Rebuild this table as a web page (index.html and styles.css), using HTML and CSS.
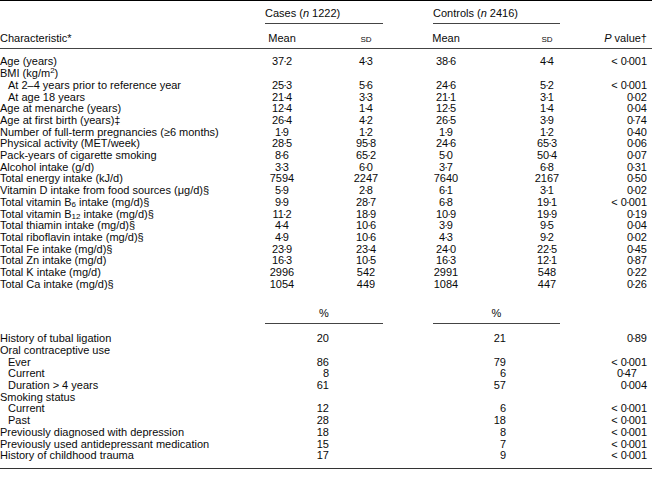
FILE: index.html
```html
<!DOCTYPE html>
<html lang="en">
<head>
<meta charset="utf-8">
<title>Characteristics of cases and controls</title>
<link rel="stylesheet" href="styles.css">
</head>
<body>
<table class="tbl">
  <colgroup>
    <col class="c1"><col class="c2"><col class="c3"><col class="c4"><col class="c5"><col class="c6">
  </colgroup>
  <thead>
    <tr class="grp-row">
      <th></th>
      <th colspan="2" class="grp"><div class="gl">Cases (<i>n</i> 1222)</div></th>
      <th colspan="2" class="grp"><div class="gl ct">Controls (<i>n</i> 2416)</div></th>
      <th></th>
    </tr>
    <tr class="hdr">
      <th class="lab">Characteristic*</th>
      <th class="m">Mean</th>
      <th class="s"><span class="sc">sd</span></th>
      <th class="m">Mean</th>
      <th class="s s2"><span class="sc">sd</span></th>
      <th class="p"><i>P</i> value†</th>
    </tr>
  </thead>
  <tbody>
    <tr class="first"><td class="lab">Age (years)</td><td class="m">37<span class="d">·</span>2</td><td class="s">4<span class="d">·</span>3</td><td class="m">38<span class="d">·</span>6</td><td class="s s2">4<span class="d">·</span>4</td><td class="p">&lt; 0<span class="d">·</span>001</td></tr>
    <tr><td class="lab">BMI (kg/m<sup>2</sup>)</td><td></td><td></td><td></td><td></td><td></td></tr>
    <tr><td class="lab in">At 2–4 years prior to reference year</td><td class="m">25<span class="d">·</span>3</td><td class="s">5<span class="d">·</span>6</td><td class="m">24<span class="d">·</span>6</td><td class="s s2">5<span class="d">·</span>2</td><td class="p">&lt; 0<span class="d">·</span>001</td></tr>
    <tr><td class="lab in">At age 18 years</td><td class="m">21<span class="d">·</span>4</td><td class="s">3<span class="d">·</span>3</td><td class="m">21<span class="d">·</span>1</td><td class="s s2">3<span class="d">·</span>1</td><td class="p">0<span class="d">·</span>02</td></tr>
    <tr><td class="lab">Age at menarche (years)</td><td class="m">12<span class="d">·</span>4</td><td class="s">1<span class="d">·</span>4</td><td class="m">12<span class="d">·</span>5</td><td class="s s2">1<span class="d">·</span>4</td><td class="p">0<span class="d">·</span>04</td></tr>
    <tr><td class="lab">Age at first birth (years)‡</td><td class="m">26<span class="d">·</span>4</td><td class="s">4<span class="d">·</span>2</td><td class="m">26<span class="d">·</span>5</td><td class="s s2">3<span class="d">·</span>9</td><td class="p">0<span class="d">·</span>74</td></tr>
    <tr><td class="lab">Number of full-term pregnancies (≥6 months)</td><td class="m">1<span class="d">·</span>9</td><td class="s">1<span class="d">·</span>2</td><td class="m">1<span class="d">·</span>9</td><td class="s s2">1<span class="d">·</span>2</td><td class="p">0<span class="d">·</span>40</td></tr>
    <tr><td class="lab">Physical activity (MET/week)</td><td class="m">28<span class="d">·</span>5</td><td class="s">95<span class="d">·</span>8</td><td class="m">24<span class="d">·</span>6</td><td class="s s2">65<span class="d">·</span>3</td><td class="p">0<span class="d">·</span>06</td></tr>
    <tr><td class="lab">Pack-years of cigarette smoking</td><td class="m">8<span class="d">·</span>6</td><td class="s">65<span class="d">·</span>2</td><td class="m">5<span class="d">·</span>0</td><td class="s s2">50<span class="d">·</span>4</td><td class="p">0<span class="d">·</span>07</td></tr>
    <tr><td class="lab">Alcohol intake (g/d)</td><td class="m">3<span class="d">·</span>3</td><td class="s">6<span class="d">·</span>0</td><td class="m">3<span class="d">·</span>7</td><td class="s s2">6<span class="d">·</span>8</td><td class="p">0<span class="d">·</span>31</td></tr>
    <tr><td class="lab">Total energy intake (kJ/d)</td><td class="m">7594</td><td class="s">2247</td><td class="m">7640</td><td class="s s2">2167</td><td class="p">0<span class="d">·</span>50</td></tr>
    <tr><td class="lab">Vitamin D intake from food sources (μg/d)§</td><td class="m">5<span class="d">·</span>9</td><td class="s">2<span class="d">·</span>8</td><td class="m">6<span class="d">·</span>1</td><td class="s s2">3<span class="d">·</span>1</td><td class="p">0<span class="d">·</span>02</td></tr>
    <tr><td class="lab">Total vitamin B<sub>6</sub> intake (mg/d)§</td><td class="m">9<span class="d">·</span>9</td><td class="s">28<span class="d">·</span>7</td><td class="m">6<span class="d">·</span>8</td><td class="s s2">19<span class="d">·</span>1</td><td class="p">&lt; 0<span class="d">·</span>001</td></tr>
    <tr><td class="lab">Total vitamin B<sub>12</sub> intake (mg/d)§</td><td class="m">11<span class="d">·</span>2</td><td class="s">18<span class="d">·</span>9</td><td class="m">10<span class="d">·</span>9</td><td class="s s2">19<span class="d">·</span>9</td><td class="p">0<span class="d">·</span>19</td></tr>
    <tr><td class="lab">Total thiamin intake (mg/d)§</td><td class="m">4<span class="d">·</span>4</td><td class="s">10<span class="d">·</span>6</td><td class="m">3<span class="d">·</span>9</td><td class="s s2">9<span class="d">·</span>5</td><td class="p">0<span class="d">·</span>04</td></tr>
    <tr><td class="lab">Total riboflavin intake (mg/d)§</td><td class="m">4<span class="d">·</span>9</td><td class="s">10<span class="d">·</span>6</td><td class="m">4<span class="d">·</span>3</td><td class="s s2">9<span class="d">·</span>2</td><td class="p">0<span class="d">·</span>02</td></tr>
    <tr><td class="lab">Total Fe intake (mg/d)§</td><td class="m">23<span class="d">·</span>9</td><td class="s">23<span class="d">·</span>4</td><td class="m">24<span class="d">·</span>0</td><td class="s s2">22<span class="d">·</span>5</td><td class="p">0<span class="d">·</span>45</td></tr>
    <tr><td class="lab">Total Zn intake (mg/d)</td><td class="m">16<span class="d">·</span>3</td><td class="s">10<span class="d">·</span>5</td><td class="m">16<span class="d">·</span>3</td><td class="s s2">12<span class="d">·</span>1</td><td class="p">0<span class="d">·</span>87</td></tr>
    <tr><td class="lab">Total K intake (mg/d)</td><td class="m">2996</td><td class="s">542</td><td class="m">2991</td><td class="s s2">548</td><td class="p">0<span class="d">·</span>22</td></tr>
    <tr><td class="lab">Total Ca intake (mg/d)§</td><td class="m">1054</td><td class="s">449</td><td class="m">1084</td><td class="s s2">447</td><td class="p">0<span class="d">·</span>26</td></tr>

    <tr class="pct-row">
      <td></td>
      <td colspan="2"><div class="gl pc">%</div></td>
      <td colspan="2"><div class="gl ct pc">%</div></td>
      <td></td>
    </tr>

    <tr class="after-pct"><td class="lab">History of tubal ligation</td><td colspan="2" class="pa">20</td><td colspan="2" class="pb">21</td><td class="p">0<span class="d">·</span>89</td></tr>
    <tr><td class="lab">Oral contraceptive use</td><td colspan="2"></td><td colspan="2"></td><td></td></tr>
    <tr><td class="lab in">Ever</td><td colspan="2" class="pa">86</td><td colspan="2" class="pb">79</td><td class="p">&lt; 0<span class="d">·</span>001</td></tr>
    <tr><td class="lab in">Current</td><td colspan="2" class="pa">8</td><td colspan="2" class="pb">6</td><td class="p shift">0<span class="d">·</span>47</td></tr>
    <tr><td class="lab in">Duration &gt; 4 years</td><td colspan="2" class="pa">61</td><td colspan="2" class="pb">57</td><td class="p">0<span class="d">·</span>004</td></tr>
    <tr><td class="lab">Smoking status</td><td colspan="2"></td><td colspan="2"></td><td></td></tr>
    <tr><td class="lab in">Current</td><td colspan="2" class="pa">12</td><td colspan="2" class="pb">6</td><td class="p">&lt; 0<span class="d">·</span>001</td></tr>
    <tr><td class="lab in">Past</td><td colspan="2" class="pa">28</td><td colspan="2" class="pb">18</td><td class="p">&lt; 0<span class="d">·</span>001</td></tr>
    <tr><td class="lab">Previously diagnosed with depression</td><td colspan="2" class="pa">18</td><td colspan="2" class="pb">8</td><td class="p">&lt; 0<span class="d">·</span>001</td></tr>
    <tr><td class="lab">Previously used antidepressant medication</td><td colspan="2" class="pa">15</td><td colspan="2" class="pb">7</td><td class="p">&lt; 0<span class="d">·</span>001</td></tr>
    <tr class="last"><td class="lab">History of childhood trauma</td><td colspan="2" class="pa">17</td><td colspan="2" class="pb">9</td><td class="p">&lt; 0<span class="d">·</span>001</td></tr>
  </tbody>
</table>
</body>
</html>
```

FILE: styles.css
```css
html, body {
  margin: 0;
  padding: 0;
  background: #ffffff;
}

body {
  color: #0a0a0a;
  font-family: "Liberation Sans", Arial, sans-serif;
  font-size: 11px;
  line-height: 11.7px;
}

.tbl {
  width: 652px;
  border-collapse: collapse;
  table-layout: fixed;
  border-top: 1px solid #000000;
  border-bottom: 1px solid #333333;
}

.c1 { width: 262px; }
.c2 { width: 40px; }
.c3 { width: 128px; }
.c4 { width: 32px; }
.c5 { width: 140px; }
.c6 { width: 50px; }

.tbl th,
.tbl td {
  padding: 0;
  font-weight: normal;
  white-space: nowrap;
  vertical-align: top;
  overflow: visible;
}

/* group headings */
.grp-row th {
  padding-top: 7px;
  text-align: left;
}

.gl {
  margin-left: 3px;
  width: 118px;
  padding-bottom: 3px;
  border-bottom: 1px solid #444444;
}

.gl.ct {
  width: 127px;
}

.hdr th {
  padding-top: 9px;
  padding-bottom: 4px;
  border-bottom: 1px solid #444444;
}

.sc {
  font-variant: small-caps;
}

/* columns */
.lab {
  text-align: left;
  padding-left: 1px;
}

.lab.in {
  padding-left: 8px;
}

.m,
.s {
  text-align: center;
}

.tbl .s2 {
  padding-left: 30px;
}

.tbl .p {
  text-align: right;
  padding-right: 5px;
}

.tbl .p.shift {
  padding-right: 15px;
}

.d {
  margin: 0 -1px;
}

sup {
  font-size: 8px;
  line-height: 0;
  vertical-align: 4px;
}

sub {
  font-size: 8px;
  line-height: 0;
  vertical-align: -1px;
}

.first td {
  padding-top: 7px;
}

/* percent section */
.pct-row td {
  padding-top: 18px;
}

.gl.pc {
  text-align: center;
  padding-bottom: 3px;
}

.after-pct td {
  padding-top: 9px;
}

.tbl .pa {
  text-align: right;
  padding-right: 101px;
}

.tbl .pb {
  text-align: right;
  padding-right: 96px;
}

.last td {
  padding-bottom: 6px;
}
```
